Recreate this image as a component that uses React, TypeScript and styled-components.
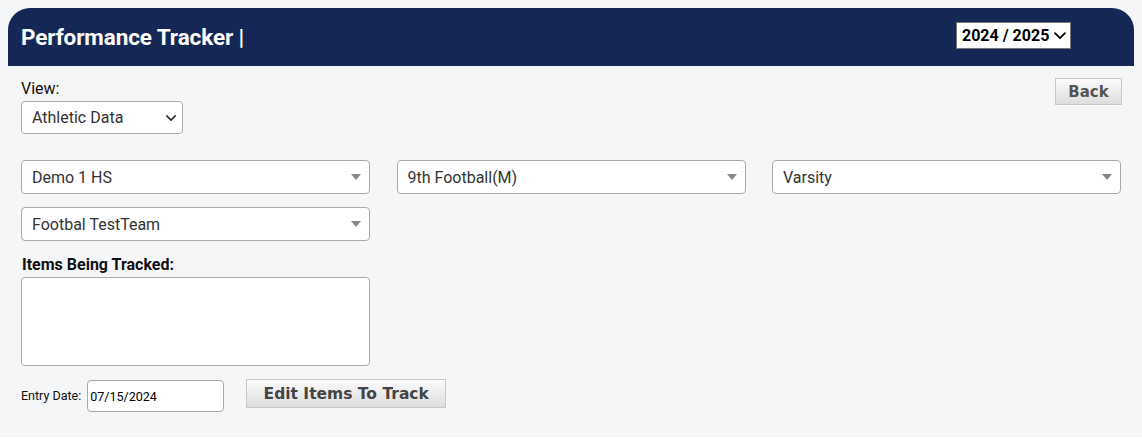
import React from "react";
import styled, { createGlobalStyle } from "styled-components";

const Global = createGlobalStyle`
  html, body { margin: 0; padding: 0; background: #ffffff; }
  body { font-family: Roboto, "Liberation Sans", Arial, sans-serif; }
  * { box-sizing: border-box; }
`;

const Page = styled.div`
  background: #f5f6f8;
  height: 437px;
  padding: 8px 8px 0 8px;
`;

const Header = styled.header`
  height: 58px;
  background: #142755;
  border-radius: 22px 22px 0 0;
  display: flex;
  align-items: center;
  justify-content: space-between;
  padding: 0 63px 0 13px;
`;

const Title = styled.h1`
  margin: 0;
  color: #ffffff;
  font-family: Roboto, "Liberation Sans", sans-serif;
  font-weight: 700;
  font-size: 22.5px;
  letter-spacing: -0.1px;
`;

const YearSelect = styled.div`
  width: 115px;
  height: 27px;
  background: #ffffff;
  border: 1px solid #777;
  display: flex;
  align-items: center;
  justify-content: space-between;
  padding: 0 4px 0 5px;
  font-family: Roboto, "Liberation Sans", sans-serif;
  font-weight: 700;
  font-size: 16px;
  color: #000;
  margin-top: -3px;
`;

const Body = styled.div`
  padding: 14px 13px 0 13px;
`;

const TopRow = styled.div`
  display: flex;
  justify-content: space-between;
  align-items: flex-start;
`;

const ViewGroup = styled.div`
  display: flex;
  flex-direction: column;
  gap: 3px;
`;

const Label = styled.label`
  font-size: 16px;
  color: #111;
  line-height: 18px;
`;

const BoldLabel = styled(Label)`
  font-weight: 700;
  display: block;
  padding-left: 1px;
  margin-bottom: 3px;
`;

const SelectBox = styled.div<{ $w?: number; $h?: number }>`
  position: relative;
  width: ${(p) => (p.$w ? `${p.$w}px` : "100%")};
  height: ${(p) => p.$h ?? 34}px;
  background: #ffffff;
  border: 1px solid #aaa;
  border-radius: 4px;
  display: flex;
  align-items: center;
  padding-left: 10px;
  font-size: 16px;
  color: #333;
`;

const ArrowIcon = styled.svg`
  position: absolute;
  right: 8px;
  top: 50%;
  transform: translateY(-50%);
`;

const BackButton = styled.button`
  margin-top: -2px;
  width: 67px;
  height: 27px;
  border: 1px solid #c8c8c8;
  background: linear-gradient(#fbfbfb, #dddddd);
  font-family: "DejaVu Sans", Verdana, sans-serif;
  font-weight: 700;
  font-size: 15px;
  color: #555;
  padding: 0;
  margin-right: -1px;
`;

const Grid = styled.div`
  display: grid;
  grid-template-columns: repeat(3, 1fr);
  column-gap: 26.5px;
  row-gap: 13px;
  margin-top: 26px;
`;

const Tracked = styled.div`
  margin-top: 15px;
  width: 349px;
`;

const TextArea = styled.div`
  width: 349px;
  height: 89px;
  background: #fff;
  border: 1px solid #aaa;
  border-radius: 4px;
`;

const BottomRow = styled.div`
  display: flex;
  align-items: flex-start;
  margin-top: 14px;
`;

const SmallLabel = styled.span`
  font-size: 12.5px;
  color: #111;
  margin-top: 8px;
  margin-right: 6px;
`;

const DateInput = styled.div`
  width: 137px;
  height: 32px;
  background: #fff;
  border: 1px solid #aaa;
  border-radius: 4px;
  display: flex;
  align-items: center;
  padding-left: 2px;
  font-size: 12.5px;
  color: #000;
`;

const EditButton = styled.button`
  margin-left: 22px;
  margin-top: -1px;
  width: 200px;
  height: 29px;
  border: 1px solid #c8c8c8;
  background: linear-gradient(#fbfbfb, #dddddd);
  font-family: "DejaVu Sans", Verdana, sans-serif;
  font-weight: 700;
  font-size: 15.5px;
  color: #444;
  padding: 0;
`;

const Triangle = () => (
  <ArrowIcon width="10" height="6" viewBox="0 0 10 6">
    <path d="M0 0 L10 0 L5 6 Z" fill="#888" />
  </ArrowIcon>
);

const Chevron = ({ size = 12, stroke = "#333", w = 1.8 }: { size?: number; stroke?: string; w?: number }) => (
  <svg width={size} height={size * 0.6} viewBox="0 0 12 7">
    <path d="M1 1 L6 6 L11 1" fill="none" stroke={stroke} strokeWidth={w} strokeLinecap="round" strokeLinejoin="round" />
  </svg>
);

const ViewChevron = styled.span`
  position: absolute;
  right: 6px;
  top: 50%;
  transform: translateY(-50%);
  display: flex;
`;

const Dropdown = ({ label }: { label: string }) => (
  <SelectBox>
    {label}
    <Triangle />
  </SelectBox>
);

export default function App() {
  return (
    <>
      <Global />
      <Page>
        <Header>
          <Title>Performance Tracker |</Title>
          <YearSelect>
            2024 / 2025
            <Chevron size={12} stroke="#000" />
          </YearSelect>
        </Header>
        <Body>
          <TopRow>
            <ViewGroup>
              <Label>View:</Label>
              <SelectBox $w={162} $h={33}>
                Athletic Data
                <ViewChevron>
                  <Chevron size={10} stroke="#333" w={2} />
                </ViewChevron>
              </SelectBox>
            </ViewGroup>
            <BackButton>Back</BackButton>
          </TopRow>
          <Grid>
            <Dropdown label="Demo 1 HS" />
            <Dropdown label="9th Football(M)" />
            <Dropdown label="Varsity" />
            <Dropdown label="Footbal TestTeam" />
          </Grid>
          <Tracked>
            <BoldLabel>Items Being Tracked:</BoldLabel>
            <TextArea />
          </Tracked>
          <BottomRow>
            <SmallLabel>Entry Date:</SmallLabel>
            <DateInput>07/15/2024</DateInput>
            <EditButton>Edit Items To Track</EditButton>
          </BottomRow>
        </Body>
      </Page>
    </>
  );
}
